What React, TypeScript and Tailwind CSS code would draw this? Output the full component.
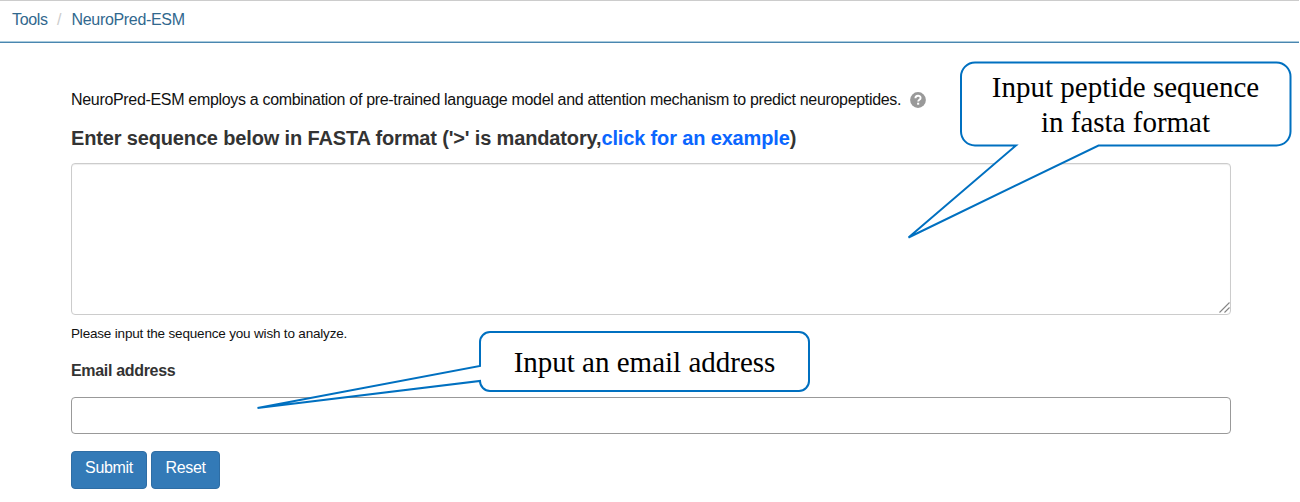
import React from "react";

function HelpIcon() {
  return (
    <svg className="ml-[9px] mt-px size-4 shrink-0" viewBox="0 0 16 16">
      <circle cx="8" cy="8" r="7.9" fill="#999" />
      <path d="M5.4 6.3 C5.4 2.9 10.6 2.9 10.6 6 C10.6 7.9 8.2 7.8 8.2 9.6" fill="none" stroke="#fff" strokeWidth="1.9" />
      <rect x="7.1" y="10.7" width="2.1" height="2" fill="#fff" />
    </svg>
  );
}

function Callouts() {
  return (
    <>
      <svg className="pointer-events-none absolute left-0 top-0 h-[502px] w-[1300px]" viewBox="0 0 1300 502" fill="#fff" stroke="#0070c0" strokeWidth="2">
        <path d="M975 62.5 H1276.5 A14 14 0 0 1 1290.5 76.5 V131.5 A14 14 0 0 1 1276.5 145.5 H1098.5 L908.5 237.5 L1016 145.5 H975 A14 14 0 0 1 961 131.5 V76.5 A14 14 0 0 1 975 62.5 Z" strokeMiterlimit="6" />
        <path d="M490 332 H799 A10 10 0 0 1 809 342 V381 A10 10 0 0 1 799 391 H490 A10 10 0 0 1 480 381 L257.5 408 L480 366 V342 A10 10 0 0 1 490 332 Z" strokeMiterlimit="4" />
      </svg>
      <div className="absolute left-[961px] top-[63px] flex h-[84px] w-[329px] items-center justify-center text-center font-['Liberation_Serif',serif] text-[29px] leading-[35px] tracking-normal text-black">
        <span>Input peptide sequence<br />in fasta format</span>
      </div>
      <div className="absolute left-[480px] top-[333px] flex h-[59px] w-[329px] items-center justify-center font-['Liberation_Serif',serif] text-[29px] leading-[35px] tracking-normal text-black">
        Input an email address
      </div>
    </>
  );
}

export default function App() {
  return (
    <div className="relative h-[502px] w-[1300px] overflow-hidden bg-white font-['Liberation_Sans',sans-serif] text-[16px] tracking-[-0.322px] text-[#111]">
      <header className="h-[43px] w-[1299px] border-b border-t border-b-[#4a86b0] border-t-[#ccc] shadow-[inset_0_-1px_0_#a9cbdd]">
        <nav className="flex pl-3 pt-[10px] leading-[18px] text-[#31688e]">
          <a className="w-9">Tools</a>
          <span className="ml-[9px] w-[14.5px] text-[#ccc]">/</span>
          <a>NeuroPred-ESM</a>
        </nav>
      </header>
      <main className="ml-[71px] w-[1160px] pt-[48px]">
        <div className="flex h-[18px] leading-[18px]">
          <p className="whitespace-nowrap">NeuroPred-ESM employs a combination of pre-trained language model and attention mechanism to predict neuropeptides.</p>
          <HelpIcon />
        </div>
        <h1 className="mt-[17px] h-[24px] whitespace-nowrap text-[20px] font-bold leading-[24px] tracking-[-0.15px] text-[#333]">
          Enter sequence below in FASTA format ('&gt;' is mandatory,<a className="text-[#0a66ff]">click for an example</a>)
        </h1>
        <div className="relative mt-[13px]">
          <textarea className="block h-[152px] w-[1160px] resize-none rounded border border-[#ccc] bg-white p-2 shadow-[inset_0_1px_1px_rgba(0,0,0,0.07)] outline-none" />
          <svg className="absolute bottom-[2px] right-[1px] size-[11px]" viewBox="0 0 11 11" stroke="#858585" strokeWidth="1.1">
            <path d="M0.5 10.5 L10.5 0.5 M5.5 10.5 L10.5 5.5" />
          </svg>
        </div>
        <p className="mt-[10px] text-[13.5px] leading-[18px] tracking-[-0.18px]">Please input the sequence you wish to analyze.</p>
        <label className="mt-[19px] block font-bold leading-[18px] text-[#333]">Email address</label>
        <input className="mt-[17px] block h-[37px] w-[1160px] rounded border border-[#999] bg-white px-3 outline-none" />
        <div className="mt-[17px] flex gap-1 text-white">
          <button className="h-[38px] w-[76px] rounded border border-[#2e6da4] bg-[#337ab7] pb-[5px] tracking-[-0.322px]">Submit</button>
          <button className="h-[38px] w-[69px] rounded border border-[#2e6da4] bg-[#337ab7] pb-[5px] tracking-[-0.322px]">Reset</button>
        </div>
      </main>
      <Callouts />
    </div>
  );
}
